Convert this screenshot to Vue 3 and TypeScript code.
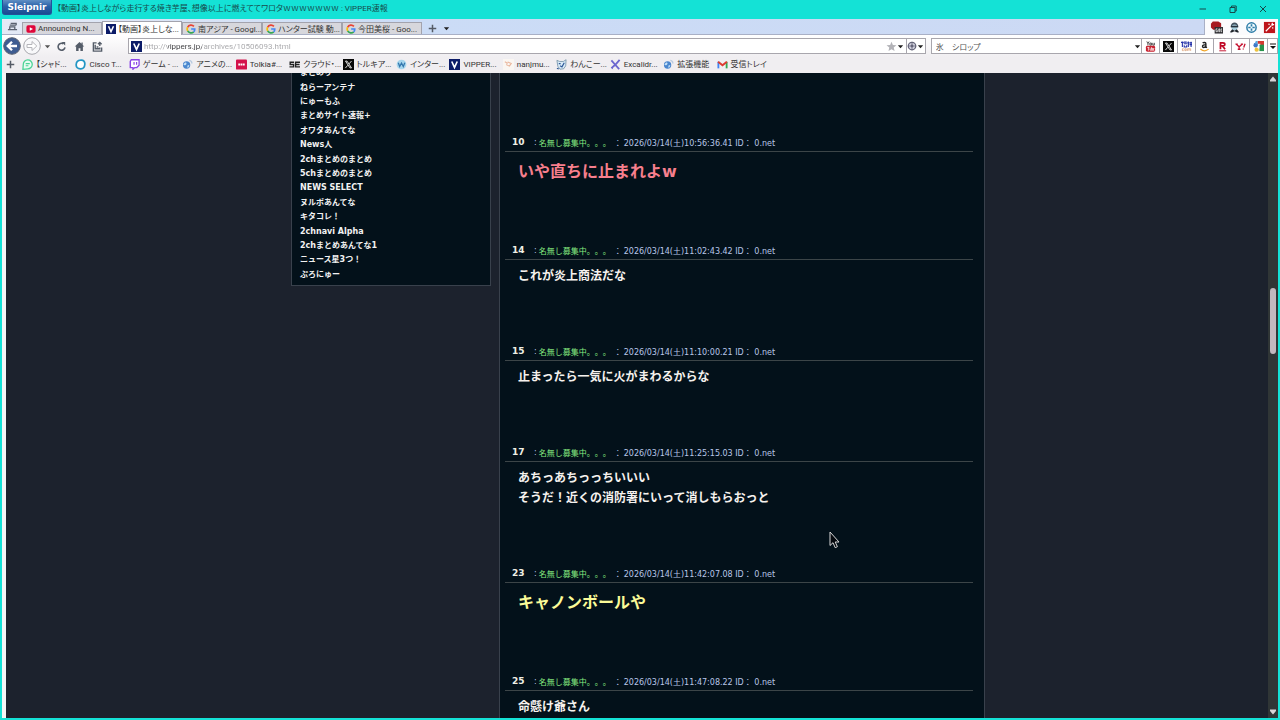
<script setup lang="ts">
import { ref } from 'vue'

interface Tab { icon: string; title: string; active?: boolean }
interface Bookmark { icon: string; label: string }
interface Post { no: number; time: string; lines: string[]; tone: string }

const tabs: Tab[] = [
  { icon: 'youtube', title: 'Announcing N...' },
  { icon: 'v', title: '【動画】炎上しな...', active: true },
  { icon: 'google', title: '南アジア - Googl...' },
  { icon: 'google', title: 'ハンター試験 動...' },
  { icon: 'google', title: '今田美桜 - Goo...' },
]

const bookmarks: Bookmark[] = [
  { icon: 'chat', label: '【シャド...' },
  { icon: 'ring', label: 'Cisco T...' },
  { icon: 'twitch', label: 'ゲーム - ...' },
  { icon: 'globe', label: 'アニメの...' },
  { icon: 'red', label: 'Tolkia#...' },
  { icon: 'se', label: 'クラウド・...' },
  { icon: 'x', label: 'トルキア...' },
  { icon: 'w', label: 'インター...' },
  { icon: 'v', label: 'VIPPER...' },
  { icon: 'nan', label: 'nanjmu...' },
  { icon: 'dog', label: 'わんこー...' },
  { icon: 'excali', label: 'Excalidr...' },
  { icon: 'globe', label: '拡張機能' },
  { icon: 'gmail', label: '受信トレイ' },
]

const engines = ['yt', 'x', 'kakaku', 'amazon', 'rakuten', 'yahoo', 'gold']

const links = [
  'まとめり', 'ねらーアンテナ', 'にゅーもふ', 'まとめサイト速報+', 'オワタあんてな',
  'News人', '2chまとめのまとめ', '5chまとめのまとめ', 'NEWS SELECT', 'ヌルポあんてな',
  'キタコレ！', '2chnavi Alpha', '2chまとめあんてな1', 'ニュース星3つ！', 'ぷろにゅー',
]

const posts: Post[] = [
  { no: 10, time: '10:56:36.41', lines: ['いや直ちに止まれよw'], tone: 'pink' },
  { no: 14, time: '11:02:43.42', lines: ['これが炎上商法だな'], tone: 'plain' },
  { no: 15, time: '11:10:00.21', lines: ['止まったら一気に火がまわるからな'], tone: 'plain' },
  { no: 17, time: '11:25:15.03', lines: ['あちっあちっっちいいい', 'そうだ！近くの消防署にいって消しもらおっと'], tone: 'plain' },
  { no: 23, time: '11:42:07.08', lines: ['キャノンボールや'], tone: 'yellow' },
  { no: 25, time: '11:47:08.22', lines: ['命懸け爺さん'], tone: 'plain' },
]

const url = ref('http://vippers.jp/archives/10506093.html')
const query = ref('氷　シロップ')
</script>

<template>
  <div class="window" lang="ja">
    <svg class="defs" width="0" height="0" aria-hidden="true">
      <symbol id="i-youtube" viewBox="0 0 12 12"><rect x="0.5" y="1.5" width="11" height="9" rx="2" fill="#e0063a" /><path d="M4.5 3.8v4.4L8.4 6z" fill="#fff" /></symbol>
      <symbol id="i-v" viewBox="0 0 12 12"><rect width="12" height="12" fill="#0c1c68" /><path d="M3 2.7 6 9.2 9 2.7" fill="none" stroke="#fff" stroke-width="1.8" /></symbol>
      <symbol id="i-google" viewBox="0 0 12 12"><g fill="none" stroke-width="2"><path d="M9.5 2.9A4.6 4.6 0 0 0 2 3.9" stroke="#ea4335" /><path d="M2 3.9a4.6 4.6 0 0 0 0 4.4" stroke="#fbbc05" /><path d="M2 8.3a4.6 4.6 0 0 0 7.2 1.1" stroke="#34a853" /><path d="M9.2 9.4A4.4 4.4 0 0 0 10.5 6H6.2" stroke="#4285f4" /></g></symbol>
      <symbol id="i-chat" viewBox="0 0 12 12"><path d="M1 11.2 1.4 6A4.9 4.9 0 1 1 6.3 10.8z" fill="#e9fbf2" stroke="#4ad395" stroke-width="1.4" /><path d="M4 5h4.5M4 7.3h3" stroke="#4ad395" stroke-width="1.2" /></symbol>
      <symbol id="i-ring" viewBox="0 0 12 12"><path d="M6 1.3c3.4-.5 5 1.600 4.700 4.700S9 10.900 6 10.700 1.100 9 1.300 6 3 1.500 6 1.300z" fill="#fff" stroke="#2396c4" stroke-width="1.900" /></symbol>
      <symbol id="i-twitch" viewBox="0 0 12 12"><path d="M2.500.8H11v6L8.500 9.300H6.300L4.300 11.200V9.300H1.500V2.500z" fill="#fff" stroke="#8a43e6" stroke-width="1.400" /><path d="M5.500 3.300v2.900M8.300 3.300v2.900M1.500 2.500v6.800h2" stroke="#8a43e6" stroke-width="1.300" fill="none" /></symbol>
      <symbol id="i-globe" viewBox="0 0 12 12"><circle cx="5" cy="6.500" r="4" fill="#4b87cf" /><path d="M3 4.200c1.500-1 2.400.2 1.700 1.400S2.500 7.500 1.500 6zM6 7l2-.5-.8 2.500-1.500.5z" fill="#c5e2f7" /><path d="M8 1.500c2 .3 2.800 1.700 2.800 3.300" fill="none" stroke="#b9cbe0" stroke-width="1.500" /></symbol>
      <symbol id="i-red" viewBox="0 0 12 12"><rect y="0.500" width="12" height="11" rx="1" fill="#d4124b" /><path d="M2.500 6h7" stroke="#fff" stroke-width="2" stroke-dasharray="2 .5" /></symbol>
      <symbol id="i-se" viewBox="0 0 12 12"><path d="M5.500 3.500H1.300V6H5v2.600H.5M12 3.500H7.200v5.100H12M7.200 6H11.500" fill="none" stroke="#222" stroke-width="1.500" /></symbol>
      <symbol id="i-x" viewBox="0 0 12 12"><rect width="12" height="12" fill="#090909" /><path d="M2.700 2.300h1.700L9.300 9.700H7.600zM9.300 2.200 6.600 5.300M5.300 6.800 2.600 9.900" fill="none" stroke="#eee" stroke-width="1" /></symbol>
      <symbol id="i-w" viewBox="0 0 12 12"><circle cx="6" cy="6" r="5.300" fill="#a7d6ed" /><path d="m2.500 4.200 1.500 4L6 4.500l2 3.700 1.600-4" fill="none" stroke="#3478ae" stroke-width="1.400" /></symbol>
      <symbol id="i-nan" viewBox="0 0 12 12"><rect width="12" height="12" fill="#faf6f2" /><path d="m2 3 2.500 1.500L4 7M5 3.300l4 1.500-2 3-3-1.600" fill="none" stroke="#e9b79e" stroke-width="1.200" /></symbol>
      <symbol id="i-dog" viewBox="0 0 12 12"><path d="m1 1.500 3 1.200h4L11 .8l-.4 6.700-2.300 3.200-4 .4L2 8z" fill="#d9ebf7" stroke="#65879d" stroke-width=".8" /><path d="m4.500 7.300 2 1.300L9 4M3 5h2M1 10l2 1" stroke="#2c5797" stroke-width="1.300" fill="none" /></symbol>
      <symbol id="i-excali" viewBox="0 0 12 12"><path d="m1.500 1.500 4 4.500 4.500 5M10.500 1 6 6l-4.500 4" stroke="#6b66cf" stroke-width="2" fill="none" /><path d="m2 9.500 1 1.500" stroke="#6b66cf" /></symbol>
      <symbol id="i-gmail" viewBox="0 0 12 12"><path d="M1.500 10.200V3" stroke="#4285f4" stroke-width="2" /><path d="M10.500 10.200V3" stroke="#34a853" stroke-width="2" /><path d="m1.200 3 4.800 3.800L10.800 3" stroke="#dd3c31" stroke-width="2.200" fill="none" /></symbol>
      <symbol id="i-yt" viewBox="0 0 12 12"><path d="m2 .5 1.200 2.300v2M4.500.5 3.200 2.800M5.300 2.200h1.700v2.300H5.300zM8.500 2v2.500h1.700V2" fill="none" stroke="#333" stroke-width=".9" /><rect x="1" y="5.300" width="10" height="6.300" rx="1.500" fill="#c8202f" /><path d="M2.500 7h2.300M3.700 7v3.500M5.500 8v2h1M7 6.700v3.500h1.300V8H7M10.200 8.200H9.200v2h1" fill="none" stroke="#fff" stroke-width=".8" /></symbol>
      <symbol id="i-kakaku" viewBox="0 0 12 12"><path d="M0 1.500h3M1.500.5v6M3 3h3.500M3.500 4.500v2h2.700v-2M6.800 2h2.400M8 .5v6M9.500 2h2.500M9.300 4h2.700M11 .7v5.800M3.300 1.200h3" fill="none" stroke="#2431a8" stroke-width="1.200" /><path d="M3 8.500H1.500v2H3M4.200 8.500h1.500v2H4.200zM7 10.800V8.500h1.700v2.300M8.700 8.500h1.800v2.300" fill="none" stroke="#dba27c" stroke-width=".9" /></symbol>
      <symbol id="i-amazon" viewBox="0 0 12 12"><path d="M4 2.300c1-1 3.500-1 3.500.7v4.500M7.300 4C5 4 3.800 4.500 3.800 5.700c0 1.800 2.500 1.700 3.500.2l1.200 1.600" fill="none" stroke="#222" stroke-width="1.500" /><path d="M1.500 8.800c3 2.400 6.500 2.200 9 .1" fill="none" stroke="#f0a52b" stroke-width="1.300" /></symbol>
      <symbol id="i-rakuten" viewBox="0 0 12 12"><path d="M3.800 9V2h2.700c2.700 0 2.700 3.400 0 3.400H4M6 5.400 8.800 9" fill="none" stroke="#bf0826" stroke-width="1.900" /><path d="M2.500 10.700h7.500" stroke="#bf0826" stroke-width="1" /></symbol>
      <symbol id="i-yahoo" viewBox="0 0 12 12"><path d="m1.500 3.500 3 2.800L7.800 3.500M4.500 6.300v2.700M3 9h3M.5 3.500H3M6.300 3.500h2.500M11 3 9.500 7M9 8.200v1" fill="none" stroke="#c5102e" stroke-width="1.400" /></symbol>
      <symbol id="i-gold" viewBox="0 0 12 12"><path d="M5 0h7v6H8V3H5z" fill="#d43a31" /><path d="M7 4h5v7H7z" fill="#25924c" /><circle cx="3" cy="4.500" r="2.500" fill="#3f78c8" /><path d="M3 0h2v3H2z" fill="#58a7df" /><circle cx="4" cy="9.500" r="2.300" fill="#edc13e" /><path d="M5 5h2v3H5z" fill="#fff" /></symbol>
      <symbol id="i-star" viewBox="0 0 12 12"><path d="m6 .8 1.500 3.600 3.900.3-3 2.500 1 3.800L6 8.900 2.700 11l.9-3.800-3-2.500 3.900-.3z" fill="#b3b3b8" /></symbol>
      <symbol id="i-plus" viewBox="0 0 12 12"><path d="M6 1v10M1 6h10" stroke="#555b66" stroke-width="2" /></symbol>
      <symbol id="i-caret" viewBox="0 0 8 8"><path d="M1 2.500h6L4 6z" fill="currentColor" /></symbol>
    </svg>

    <header class="titlebar">
      <button class="brand">Sleipnir</button>
      <h1>【動画】炎上しながら走行する焼き芋屋、想像以上に燃えててワロタｗｗｗｗｗｗｗ : VIPPER速報</h1>
      <div class="controls">
        <button aria-label="最小化"><svg viewBox="0 0 10 10"><path d="M1.500 5h6.500" /></svg></button>
        <button aria-label="元に戻す"><svg viewBox="0 0 10 10"><path d="M2 3.500h5V8.500H2zM3.500 3.500V2h4.700v5H7" /></svg></button>
        <button aria-label="閉じる"><svg viewBox="0 0 10 10"><path d="m2 2 6 6M8 2 2 8" /></svg></button>
      </div>
    </header>

    <nav class="tabrow" aria-label="タブ">
      <div class="tabstrip">
        <button class="mini" aria-label="タブ一覧"><svg viewBox="0 0 12 12"><path d="M3 4.500h7M1 9.500h10M3 9.500V6.500h5.500v3M4 2.500h6v2" fill="none" stroke="#59616f" stroke-width="1.400" /></svg></button>
        <button v-for="t in tabs" :key="t.title" class="tab" :class="{ active: t.active }">
          <svg class="ico"><use :href="'#i-' + t.icon" /></svg><span>{{ t.title }}</span>
        </button>
        <button class="add" aria-label="新しいタブ"><svg><use href="#i-plus" /></svg></button>
        <button class="drop" aria-label="タブメニュー"><svg><use href="#i-caret" /></svg></button>
      </div>
      <div class="extensions">
        <button aria-label="ブロッカー"><svg viewBox="0 0 14 14"><path d="M3 .5h6l3 2v4L9 9.500H3.500L1 7V3z" fill="#a81a20" /><rect x="5" y="6.500" width="9" height="7" fill="#303034" /><path d="M8 8.500H6.500v3H8v-1.500M9.500 8.500v3h1v-3zM13 8.500h-1v3h1" stroke="#fff" stroke-width=".8" fill="none" /></svg></button>
        <button aria-label="エージェント"><svg viewBox="0 0 14 14"><path d="M3 6C3 0 11 0 11 6z" fill="#44525f" /><circle cx="7" cy="7" r="3.300" fill="#a8cede" /><path d="M3 6h8" stroke="#26323c" stroke-width="1.800" /><path d="m2 12 2.500-3L7 10.500 9.500 9l2.500 3-2 .5-3-1.500-3 1.500z" fill="#20252c" /></svg></button>
        <button aria-label="移動"><svg viewBox="0 0 14 14"><circle cx="7" cy="7" r="5" fill="#f2fbff" stroke="#2d7ca7" stroke-width="1.600" /><path d="M7 3.500v2.500M7 8v2.500M3.500 7H6M8 7h2.500" stroke="#2d7ca7" stroke-width="1.800" /></svg></button>
        <button aria-label="ワンド"><svg viewBox="0 0 14 14"><rect x="1" y="1" width="12" height="12" fill="#bd151c" /><path d="m3 11 6-6M10 2v3M9 4h3M6 3l1 1M10 7l1 1" stroke="#fff" stroke-width="1.300" /></svg></button>
      </div>
    </nav>

    <div class="toolbar">
      <div class="navs">
        <button class="round back" aria-label="戻る"><svg viewBox="0 0 18 18"><circle cx="9" cy="9" r="8.300" fill="#3e5c91" stroke="#5b6272" /><path d="M14 9H5M9 4.700 4.700 9 9 13.300" fill="none" stroke="#fff" stroke-width="2.300" /></svg></button>
        <button class="round" aria-label="進む"><svg viewBox="0 0 18 18"><circle cx="9" cy="9" r="8.300" fill="#f8f8fa" stroke="#a7a7ad" /><path d="M4 7.500h5V4.500L13.800 9 9 13.500v-3H4z" fill="#fff" stroke="#b5b5ba" /></svg></button>
        <button class="drop" aria-label="履歴"><svg><use href="#i-caret" /></svg></button>
        <button class="tool" aria-label="更新"><svg viewBox="0 0 12 12"><path d="M8 3A3.800 3.800 0 1 0 9.800 7" fill="none" stroke="#555d69" stroke-width="1.700" /><path d="M6 1.200h4V5z" fill="#555d69" /></svg></button>
        <button class="tool" aria-label="ホーム"><svg viewBox="0 0 12 12"><path d="M6 1 .8 6h1.500v5H5V8h2v3h2.700V6h1.500L9.500 4.400V1.500H8.200v1.600z" fill="#555d69" /></svg></button>
        <button class="tool" aria-label="保存"><svg viewBox="0 0 12 12"><path d="M5 2H1.500v9h9V7M3.500 4v4.500h5V7M8.500 5.500v-4M6.500 3.500l2-2 2 2M5 6.500h2" fill="none" stroke="#555d69" stroke-width="1.500" /></svg></button>
      </div>
      <div class="address">
        <svg class="ico"><use href="#i-v" /></svg>
        <input v-model="url" class="url" aria-label="アドレス">
        <button aria-label="お気に入り"><svg class="ico"><use href="#i-star" /></svg></button>
        <button class="drop" aria-label="アドレス履歴"><svg><use href="#i-caret" /></svg></button>
        <button class="engine" aria-label="エンジン切替"><svg viewBox="0 0 12 12"><circle cx="6" cy="6" r="4.500" fill="#dcdce8" stroke="#65657a" stroke-width="1.500" /><circle cx="6" cy="6" r="2" fill="#65657a" /><path d="M6 1v3M6 8v3M1 6h3M8 6h3" stroke="#65657a" /></svg><svg class="caret"><use href="#i-caret" /></svg></button>
      </div>
      <div class="search">
        <input v-model="query" aria-label="検索">
        <button class="drop" aria-label="検索履歴"><svg><use href="#i-caret" /></svg></button>
        <button v-for="e in engines" :key="e" class="site" :aria-label="e"><svg><use :href="'#i-' + e" /></svg></button>
        <button class="more" aria-label="その他"><svg viewBox="0 0 8 10"><path d="M1 3h6" stroke="#111" /><path d="M1 5h6L4 8z" fill="#111" /></svg></button>
      </div>
    </div>

    <nav class="bookmarks" aria-label="ブックマーク">
      <button class="add" aria-label="追加"><svg><use href="#i-plus" /></svg></button>
      <div class="marks">
        <a v-for="b in bookmarks" :key="b.label" href="#"><svg class="ico"><use :href="'#i-' + b.icon" /></svg><span>{{ b.label }}</span></a>
      </div>
    </nav>

    <div class="viewport">
      <div class="page">
        <aside>
          <ul><li v-for="l in links" :key="l"><a href="#">{{ l }}</a></li></ul>
        </aside>
        <main>
          <article v-for="p in posts" :key="p.no">
            <header><b>{{ p.no }}</b><span>:</span><span class="name">名無し募集中。。。</span><span class="sep">：</span><span>2026/03/14(土){{ p.time }} ID： 0.net</span></header>
            <div class="body" :class="p.tone"><p v-for="line in p.lines" :key="line">{{ line }}</p></div>
          </article>
        </main>
      </div>
      <div class="scrollbar" aria-hidden="true">
        <svg viewBox="0 0 8 8"><path d="M4 1.500 7 5v1.500H1V5z" fill="#d6d3d6" /></svg>
        <div class="track"><div class="thumb"></div></div>
        <svg viewBox="0 0 8 8"><path d="M4 6.500 7 3V1.500H1V3z" fill="#d6d3d6" /></svg>
      </div>
    </div>

    <svg class="cursor" viewBox="0 0 12 18" aria-hidden="true"><path d="M1 1v13.500l3-2.800 2.200 5 2.200-1-2.200-4.700H10z" fill="#05090e" stroke="#d8d8d8" /></svg>
  </div>
</template>

<style>
html, body { margin: 0; background: #1c222d; overflow: hidden; }
</style>

<style scoped>
* { box-sizing: border-box; }
.window { position: relative; display: flex; flex-direction: column; height: 100vh; padding: 0 2px 2px; background: #14e2d6; font-family: Roboto, "Noto Sans CJK JP", sans-serif; font-size: 8px; color: #333; overflow: hidden; }
.defs { position: absolute; }
button { display: flex; align-items: center; justify-content: center; padding: 0; border: 0; background: none; font: inherit; color: inherit; flex: none; }
svg { display: block; flex: none; }
.ico { width: 11px; height: 11px; }
.titlebar, .tabrow, .toolbar, .bookmarks { flex: none; font-feature-settings: "palt"; white-space: nowrap; }

.titlebar { display: flex; height: 19px; }
.brand { width: 50px; height: 15px; border: 1px solid #24509a; border-top: 0; border-radius: 0 0 3px 3px; background: linear-gradient(#5f8fc4, #2c62a8 45%, #1a4b92); color: #fff; font: bold 9px "DejaVu Sans", sans-serif; }
h1 { margin: 0 0 0 5px; font-size: 8px; font-weight: 400; line-height: 18px; color: #174b4c; }
.controls { display: flex; margin-left: auto; }
.controls button { width: 30px; height: 18px; }
.controls svg { width: 10px; height: 10px; fill: none; stroke: #17484a; stroke-width: 1; }

.tabrow { display: flex; height: 16px; background: #fbfbfd; }
.tabstrip { display: flex; flex: 1; align-items: flex-end; border: 1px solid #a9b0c6; border-width: 0 1px 1px 0; background: linear-gradient(90deg, #e4eaf6, #cbdcf6 400px, #ccd9f4); }
.mini { width: 20px; height: 15px; }
.mini svg { width: 11px; height: 11px; }
.tab { width: 80px; height: 12px; padding: 0 3px; gap: 2px; justify-content: flex-start; border: 1px solid #a3a3ad; border-width: 1px 1px 0; background: #d7d7dc; overflow: hidden; }
.tab .ico { width: 10px; height: 10px; }
.tab.active { height: 14px; margin-bottom: -1px; background: #fff; }
.add svg { width: 9px; height: 9px; }
.tabstrip .add { width: 20px; height: 12px; }
.drop { width: 8px; height: 14px; color: #222; }
.drop svg { width: 7px; height: 7px; }
.tabstrip .drop { height: 12px; }
.extensions { display: flex; align-items: center; width: 73px; justify-content: space-between; padding: 0 2px 0 5px; }
.extensions svg { width: 13px; height: 13px; }

.toolbar { display: flex; align-items: center; height: 22px; background: linear-gradient(#fff, #f0eef1); }
.navs { display: flex; align-items: center; width: 126px; }
.round { width: 20px; }
.round svg { width: 18px; height: 18px; }
.navs .drop { width: 10px; color: #555; }
.tool { width: 18px; }
.tool svg { width: 11px; height: 11px; }
.address, .search { display: flex; align-items: center; height: 16px; border: 1px solid #a8a6ad; background: #fff; }
.address { flex: 23 1 0; padding-left: 2px; }
.search { flex: 10 1 0; margin-left: 5px; }
input { flex: 1; min-width: 0; height: 14px; padding: 0 4px; border: 0; outline: 0; background: none; font: inherit; color: #555; }
.url { padding: 0 2px; background: linear-gradient(90deg, #a5a5a8 26px, #3d3d40 26px, #3d3d40 60px, #a5a5a8 60px) text; color: transparent; }
.engine { width: 19px; height: 14px; margin-left: 1px; border-left: 1px solid #a8a6ad; color: #222; }
.engine svg { width: 10px; height: 10px; }
.engine .caret { width: 7px; height: 7px; }
.site { width: 18px; height: 14px; border-left: 1px solid #a8a6ad; }
.site svg { width: 11px; height: 11px; }
.more { width: 10px; height: 14px; border-left: 1px solid #a8a6ad; }
.more svg { width: 8px; height: 10px; }

.bookmarks { display: flex; align-items: center; height: 16px; padding-bottom: 1px; background: #f0eef1; }
.bookmarks .add { width: 17px; }
.marks { display: grid; grid-template-columns: repeat(14, 1fr); width: 748px; margin-left: 3px; }
.marks a { display: flex; align-items: center; gap: 3px; line-height: 12px; color: #333; text-decoration: none; }

.viewport { display: flex; flex: 1; min-height: 0; border-left: 4px solid #f5f5f5; background: #1c222d; font-family: "DejaVu Sans", "Noto Sans CJK JP", sans-serif; text-spacing-trim: space-all; }
.page { display: flex; flex: 1; justify-content: center; align-items: flex-start; gap: 8px; padding-left: 2px; overflow: hidden; }
aside { width: 200px; padding: 0 8px 3px; border: 1px solid #39414c; border-top: 0; background: #03111a; }
ul { display: grid; grid-auto-rows: 1fr; height: 216px; margin: -7px 0 0; padding: 0; list-style: none; }
li { display: flex; align-items: center; line-height: 14px; }
li a { color: #f2f2f2; font-weight: 700; text-decoration: none; }
main { width: 486px; padding: 60px 11px 0 5px; border: 1px solid #39414c; border-width: 0 1px; background: #03111a; }
article { margin-bottom: 56px; }
article header { display: flex; align-items: center; height: 19px; padding-left: 7px; border-bottom: 1px solid #3c4548; color: #b8c6e8; white-space: pre; }
article b { width: 22px; font-size: 9px; color: #f0f0e6; }
.name { margin-left: 2px; color: #86ea80; }
.sep { margin: 0 2px 0 3px; }
.body { padding: 6px 0 0 13px; font-size: 12px; line-height: 20px; font-weight: 700; color: #f6f2ee; }
.body.pink { color: #f77f8d; font-size: 16px; line-height: 27px; }
.body.yellow { color: #fbfb98; font-size: 16px; line-height: 27px; }
p { margin: 0; }
.scrollbar { display: flex; flex-direction: column; align-items: center; width: 10px; padding: 2px 0; background: #303636; }
.scrollbar svg { width: 8px; height: 8px; }
.track { flex: 1; width: 6px; padding-top: 205px; }
.thumb { height: 66px; border-radius: 3px; background: #c2b8be; }
.cursor { position: absolute; left: 829px; top: 531px; width: 12px; height: 18px; }
</style>
